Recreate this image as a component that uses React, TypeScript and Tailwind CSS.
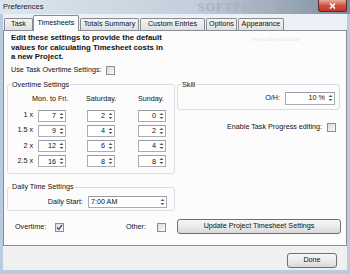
import React from 'react';

const font = { fontFamily: '"Liberation Sans", Arial, sans-serif' };

const SpinArrows = () => (
  <svg width="5" height="8" viewBox="0 0 5 8" className="shrink-0">
    <path d="M0.5 3 L2.5 1 L4.5 3 Z" fill="#555" />
    <path d="M0.5 5 L2.5 7 L4.5 5 Z" fill="#555" />
  </svg>
);

const Spin = ({ value, className }: { value: string; className: string }) => (
  <div
    className={`flex items-center justify-end border border-[#abadb3] border-t-[#9a9ca3] bg-white pr-[1px] ${className}`}
  >
    <span className="mr-[3px] leading-none">{value}</span>
    <SpinArrows />
  </div>
);

const Check = ({ checked = false }: { checked?: boolean }) => (
  <div className="w-[9px] h-[9px] shrink-0 border border-[#8f8f8f] bg-gradient-to-br from-[#dcdcdc] to-[#fafafa] flex items-center justify-center">
    {checked && (
      <svg width="7" height="7" viewBox="0 0 7 7">
        <path d="M1 3.5 L2.8 5.5 L6 1" fill="none" stroke="#3d4f8a" strokeWidth="1.3" />
      </svg>
    )}
  </div>
);

const Tab = ({ label, w, active = false }: { label: string; w: string; active?: boolean }) =>
  active ? (
    <div
      className={`${w} h-[16px] -mb-[1px] z-10 border border-b-0 border-[#898c95] bg-[#fcfcfc] rounded-t-[2px] flex items-center justify-center pb-[1px]`}
    >
      {label}
    </div>
  ) : (
    <div
      className={`${w} ml-[1px] h-[12px] border border-b-0 border-[#898c95] bg-gradient-to-b from-[#f4f4f4] to-[#e0e0e0] rounded-t-[2px] flex items-center justify-center`}
    >
      {label}
    </div>
  );

const Button = ({ label, className }: { label: string; className: string }) => (
  <div
    className={`border border-[#707070] rounded-[3px] bg-gradient-to-b from-[#f6f6f6] via-[#ebebeb] to-[#d9d9d9] flex items-center justify-center ${className}`}
  >
    {label}
  </div>
);

const rows = [
  ['1 x', '7', '2', '0'],
  ['1.5 x', '9', '4', '2'],
  ['2 x', '12', '6', '4'],
  ['2.5 x', '16', '8', '8'],
];

export default function App() {
  return (
    <div
      style={font}
      className="w-[350px] h-[274px] flex flex-col bg-[#b9cbdf] text-[7.2px] text-[#111] overflow-hidden"
    >
      {/* Title bar */}
      <div className="relative h-[14px] shrink-0 flex items-start bg-gradient-to-r from-[#dde6ef] via-[#c2cfdc] via-55% to-[#7f8e9f]">
        <span className="ml-[3px] mt-[3px] text-[7.5px] leading-[8px] text-[#1a1a1a]">Preferences</span>
        <span className="absolute left-[198px] top-0 text-[12px] leading-[14px] tracking-[1px] text-[#a7b3c0] font-bold font-['Liberation_Serif',serif]">
          SOFTPEDIA
        </span>
        <div className="absolute right-[3px] top-0 w-[29px] h-[12px] rounded-b-[3px] border border-t-0 border-[#5b2a2a] bg-gradient-to-b from-[#e7a99d] via-[#d0503f] to-[#c0392b] flex items-center justify-center">
          <svg width="7" height="6" viewBox="0 0 7 6">
            <path d="M1 0.5 L6 5.5 M6 0.5 L1 5.5" stroke="#fff" strokeWidth="1.6" />
          </svg>
        </div>
      </div>

      {/* Client */}
      <div className="flex-1 mx-[3px] mb-[4px] flex flex-col bg-[#f0f0f0]">
        {/* Tabs */}
        <div className="h-[16px] shrink-0 flex items-end pl-[1px] bg-[#edf1f5]">
          <Tab label="Task" w="w-[29px] !ml-0" />
          <Tab label="Timesheets" w="w-[46px]" active />
          <Tab label="Totals Summary" w="w-[59px]" />
          <Tab label="Custom Entries" w="w-[65px]" />
          <Tab label="Options" w="w-[31px]" />
          <Tab label="Appearance" w="w-[46px]" />
        </div>

        {/* Panel */}
        <div className="relative h-[216px] shrink-0 border border-[#898c95] bg-[#fcfcfc] flex flex-col">
          <span className="absolute left-[247px] top-[4px] text-[6px] text-[#e2e6ea] font-['Liberation_Serif',serif]">
            www.softpedia.com
          </span>
          <div className="pl-[7px] pt-[2px] font-bold text-[7.8px] leading-[9.5px]">
            Edit these settings to provide the default
            <br />
            values for calculating Timesheet costs in
            <br />a new Project.
          </div>
          <div className="mt-[4px] h-[10px] flex items-center pl-[7px]">
            <span className="w-[95px]">Use Task Overtime Settings:</span>
            <Check />
          </div>

          <div className="mt-[5px] flex items-start">
            {/* Left column */}
            <div className="ml-[3px] w-[168px] flex flex-col">
              <fieldset className="border border-[#d5dfe5] rounded-[3px] pb-[6px]">
                <legend className="ml-[3px] px-[1px] h-[8px] leading-[8px]">Overtime Settings</legend>
                <div className="mt-[6px] h-[9px] flex items-center whitespace-nowrap">
                  <span className="w-[24px]" />
                  <span className="w-[54px]">Mon. to Fri.</span>
                  <span className="w-[52px]">Saturday.</span>
                  <span>Sunday.</span>
                </div>
                <div className="mt-[6px] flex flex-col gap-[3.3px]">
                  {rows.map((r) => (
                    <div key={r[0]} className="h-[12px] flex items-center">
                      <span className="w-[27px] pr-[2px] text-right">{r[0]}</span>
                      <Spin value={r[1]} className="ml-[3px] w-[28px] h-[12px]" />
                      <Spin value={r[2]} className="ml-[21px] w-[28px] h-[12px]" />
                      <Spin value={r[3]} className="ml-[23px] w-[28px] h-[12px]" />
                    </div>
                  ))}
                </div>
              </fieldset>

              <fieldset className="mt-[9px] border border-[#d5dfe5] rounded-[3px] pb-[2px]">
                <legend className="ml-[3px] px-[1px] h-[8px] leading-[8px]">Daily Time Settings</legend>
                <div className="mt-[5px] flex items-center justify-end pr-[7px]">
                  <span className="mr-[5px]">Daily Start:</span>
                  <div className="w-[79px] h-[12px] border border-[#abadb3] border-t-[#9a9ca3] bg-white flex items-center justify-between pl-[2px] pr-[1px]">
                    <span>7:00 AM</span>
                    <SpinArrows />
                  </div>
                </div>
              </fieldset>

              <div className="mt-[11px] h-[10px] flex items-center">
                <span className="ml-[8px] w-[40px]">Overtime:</span>
                <Check checked />
                <span className="ml-[62px] w-[31px]">Other:</span>
                <Check />
              </div>
            </div>

            {/* Right column */}
            <div className="ml-[2px] w-[164px] flex flex-col">
              <fieldset className="w-[163px] border border-[#d5dfe5] rounded-[3px] pb-[4px]">
                <legend className="ml-[3px] px-[1px] h-[8px] leading-[8px]">Skill</legend>
                <div className="mt-[3px] flex items-center justify-end pr-[4px]">
                  <span className="mr-[5px]">O/H:</span>
                  <Spin value="10 %" className="w-[50px] h-[13px]" />
                </div>
              </fieldset>

              <div className="mt-[13px] h-[10px] flex items-center justify-end pr-[5px]">
                <span className="mr-[5px]">Enable Task Progress editing:</span>
                <Check />
              </div>

              <Button label="Update Project Timesheet Settings" className="mt-[86px] w-[164px] h-[15px]" />
            </div>
          </div>
        </div>

        {/* Bottom bar */}
        <div className="flex-1 flex justify-end items-start pt-[7px] pr-[10px]">
          <Button label="Done" className="w-[50px] h-[15px]" />
        </div>
      </div>
    </div>
  );
}
